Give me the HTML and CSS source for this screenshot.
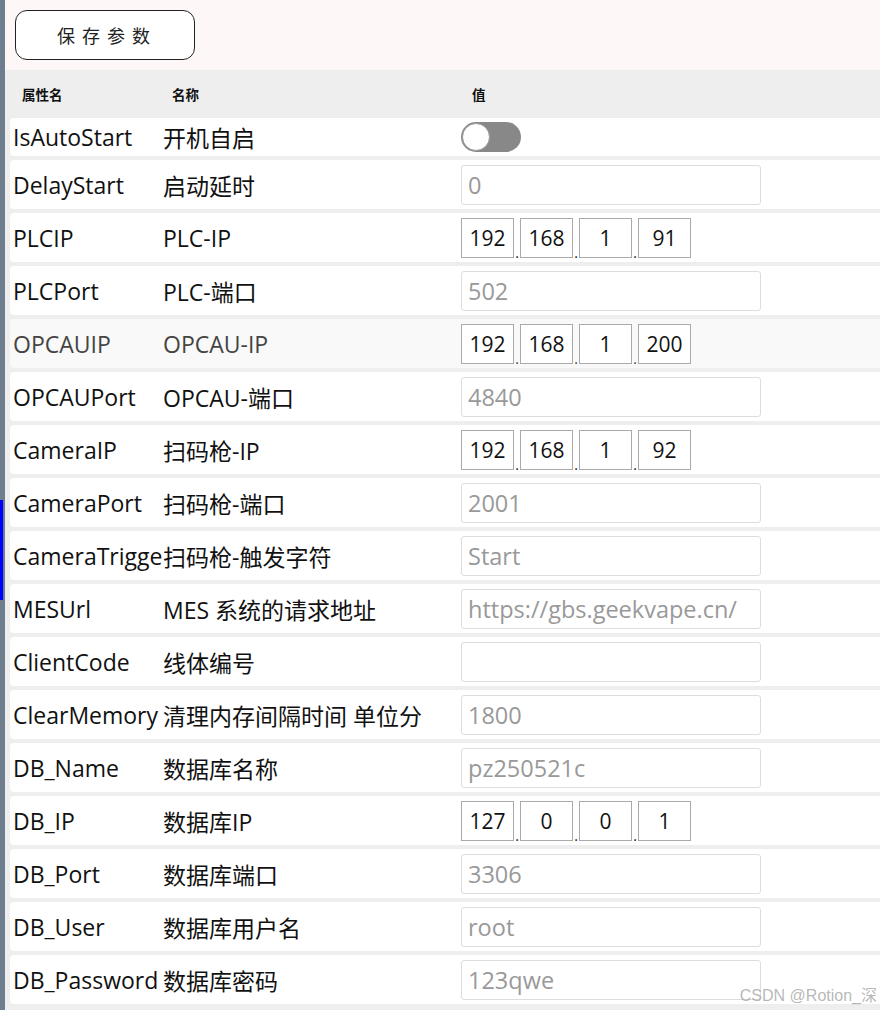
FILE: index.html
```html
<!DOCTYPE html>
<html lang="zh">
<head>
  <meta charset="UTF-8" />
  <title>参数设置</title>
  <link rel="stylesheet" href="styles.css">
</head>
<body>
  <div class="side">
    <div class="side-mark"></div>
  </div>
  <div class="main">
    <div class="toolbar">
      <button class="btn-save" type="button">保存参数</button>
    </div>
    <div class="table">
      <div class="head">
        <span>属性名</span>
        <span>名称</span>
        <span>值</span>
      </div>

      <div class="row row-short">
        <span class="key">IsAutoStart</span>
        <span class="name">开机自启</span>
        <span class="switch"><i></i></span>
      </div>
      <div class="row">
        <span class="key">DelayStart</span>
        <span class="name">启动延时</span>
        <input class="val" type="text" value="0" />
      </div>
      <div class="row">
        <span class="key">PLCIP</span>
        <span class="name">PLC-IP</span>
        <span class="ip"><input value="192" /><b>.</b><input value="168" /><b>.</b><input value="1" /><b>.</b><input value="91" /></span>
      </div>
      <div class="row">
        <span class="key">PLCPort</span>
        <span class="name">PLC-端口</span>
        <input class="val" type="text" value="502" />
      </div>
      <div class="row row-hover">
        <span class="key">OPCAUIP</span>
        <span class="name">OPCAU-IP</span>
        <span class="ip"><input value="192" /><b>.</b><input value="168" /><b>.</b><input value="1" /><b>.</b><input value="200" /></span>
      </div>
      <div class="row">
        <span class="key">OPCAUPort</span>
        <span class="name">OPCAU-端口</span>
        <input class="val" type="text" value="4840" />
      </div>
      <div class="row">
        <span class="key">CameraIP</span>
        <span class="name">扫码枪-IP</span>
        <span class="ip"><input value="192" /><b>.</b><input value="168" /><b>.</b><input value="1" /><b>.</b><input value="92" /></span>
      </div>
      <div class="row">
        <span class="key">CameraPort</span>
        <span class="name">扫码枪-端口</span>
        <input class="val" type="text" value="2001" />
      </div>
      <div class="row">
        <span class="key">CameraTrigger</span>
        <span class="name">扫码枪-触发字符</span>
        <input class="val" type="text" value="Start" />
      </div>
      <div class="row">
        <span class="key">MESUrl</span>
        <span class="name">MES 系统的请求地址</span>
        <input class="val" type="text" value="https://gbs.geekvape.cn/" />
      </div>
      <div class="row">
        <span class="key">ClientCode</span>
        <span class="name">线体编号</span>
        <input class="val" type="text" value="" />
      </div>
      <div class="row">
        <span class="key">ClearMemory</span>
        <span class="name">清理内存间隔时间 单位分</span>
        <input class="val" type="text" value="1800" />
      </div>
      <div class="row">
        <span class="key">DB_Name</span>
        <span class="name">数据库名称</span>
        <input class="val" type="text" value="pz250521c" />
      </div>
      <div class="row">
        <span class="key">DB_IP</span>
        <span class="name">数据库IP</span>
        <span class="ip"><input value="127" /><b>.</b><input value="0" /><b>.</b><input value="0" /><b>.</b><input value="1" /></span>
      </div>
      <div class="row">
        <span class="key">DB_Port</span>
        <span class="name">数据库端口</span>
        <input class="val" type="text" value="3306" />
      </div>
      <div class="row">
        <span class="key">DB_User</span>
        <span class="name">数据库用户名</span>
        <input class="val" type="text" value="root" />
      </div>
      <div class="row">
        <span class="key">DB_Password</span>
        <span class="name">数据库密码</span>
        <input class="val" type="text" value="123qwe" />
      </div>
    </div>
  </div>
  <div class="watermark">CSDN @Rotion_深</div>
</body>
</html>
```

FILE: styles.css
```css
:root {
  --gris: #eeeeee;
  --borde: #dddddd;
  --texto: #111111;
  --tenue: #999999;
  --pizarra: #6f7e8e;
}

html, body {
  height: 100%;
}

body {
  margin: 0;
  display: flex;
  overflow: hidden;
  background: var(--gris);
  font-family: "Open Sans", "Noto Sans CJK SC", sans-serif;
  color: var(--texto);
}

.side {
  width: 5px;
  flex: none;
  background: var(--pizarra);
}

.side-mark {
  margin-top: 500px;
  width: 3px;
  height: 100px;
  background: #0000ff;
}

.main {
  flex: 1;
  display: flex;
  flex-direction: column;
}

.toolbar {
  height: 70px;
  box-sizing: border-box;
  padding: 10px;
  background: #fdf8f7;
}

.btn-save {
  width: 180px;
  height: 50px;
  background: #fff;
  border: 1px solid #222;
  border-radius: 12px;
  font-family: "Noto Sans CJK SC", sans-serif;
  font-size: 18px;
  letter-spacing: 7px;
  padding-left: 10px;
  color: #222;
}

.table {
  display: flex;
  flex-direction: column;
  gap: 4px;
}

.head {
  height: 48px;
  display: grid;
  grid-template-columns: 150px 300px 1fr;
  align-items: center;
  padding-left: 17px;
  font-family: "Noto Sans CJK SC", sans-serif;
  font-size: 13.5px;
  font-weight: bold;
  margin-bottom: -4px;
}

.row {
  height: 49px;
  margin-left: 5px;
  padding-left: 3px;
  display: grid;
  grid-template-columns: 150px 298px 1fr;
  align-items: center;
  background: #fff;
  border-radius: 4px 0 0 4px;
  font-size: 23px;
  white-space: nowrap;
}

.row-short {
  height: 38px;
}

.row-hover {
  background: #f9f9f9;
  color: #444;
}

.key {
  overflow: hidden;
}

.val {
  width: 300px;
  height: 40px;
  box-sizing: border-box;
  border: 1px solid var(--borde);
  border-radius: 3px;
  padding: 0 6px;
  font-family: inherit;
  font-size: 23.5px;
  color: var(--tenue);
  outline: none;
}

.ip {
  display: flex;
  align-items: flex-end;
}

.ip input {
  width: 53px;
  height: 40px;
  box-sizing: border-box;
  border: 1px solid #aaaaaa;
  padding: 0;
  text-align: center;
  font-family: inherit;
  font-size: 21px;
  color: var(--texto);
  outline: none;
}

.ip b {
  width: 6px;
  font-weight: normal;
  font-size: 14px;
  line-height: 10px;
  text-align: center;
}

.switch {
  width: 60px;
  height: 30px;
  border-radius: 15px;
  background: #888888;
  display: flex;
  align-items: center;
}

.switch i {
  width: 28px;
  height: 28px;
  box-sizing: border-box;
  border-radius: 50%;
  background: #fff;
  border: 1px solid #999;
  margin-left: 1px;
}

.watermark {
  position: absolute;
  right: 3px;
  bottom: 4px;
  font-family: "Liberation Sans", "Noto Sans CJK SC", sans-serif;
  font-size: 16px;
  color: rgba(160, 160, 160, 0.75);
}
```
